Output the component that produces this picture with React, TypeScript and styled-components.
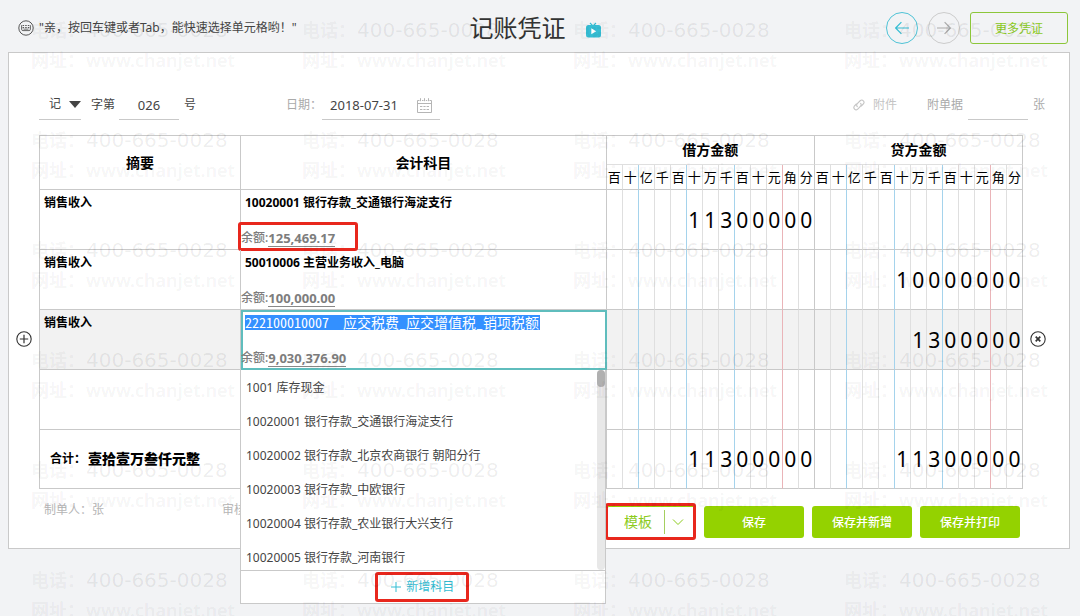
import React from "react";
import styled, { createGlobalStyle, css } from "styled-components";

const line = "#c9c9c9";
const softLine = "#dfdfdf";
const green = "#94d200";
const teal = "#5fbdbd";
const cyan = "#35bdd3";

const GlobalStyle = createGlobalStyle`
  * { box-sizing: border-box; }
  body {
    margin: 0;
    background: #f2f3f5;
    color: #444;
    font: 12px/16px "Noto Sans", "Noto Sans CJK SC", sans-serif;
  }
  button, input, select { font: inherit; color: inherit; margin: 0; }
  button { cursor: pointer; padding: 0; border: 0; background: none; }
  input, select { padding: 0; border: 0; border-radius: 0; background: none; outline: none; }
  svg { display: block; flex: none; }
`;

const Page = styled.div`
  position: relative;
  min-height: 100vh;
  overflow: hidden;
  padding-bottom: 64px;
`;

const Header = styled.header`
  display: grid;
  grid-template-columns: 1fr auto 1fr;
  align-items: center;
  padding: 12px 12px 8px 18px;
`;

const Tip = styled.p`
  display: flex;
  align-items: center;
  gap: 5px;
  margin: 0;
  white-space: nowrap;
`;

const TitleGroup = styled.div`
  display: flex;
  align-items: center;
  gap: 20px;
  padding-right: 16px;
  h1 {
    margin: 0;
    font-size: 24px;
    line-height: 32px;
    font-weight: 400;
    color: #333;
  }
  svg { margin-top: 4px; }
`;

const HeaderActions = styled.div`
  display: flex;
  justify-content: flex-end;
  gap: 10px;
`;

const RoundButton = styled.button<{ $tone: string; $ink: string }>`
  display: grid;
  place-items: center;
  width: 32px;
  height: 32px;
  border: 1px solid ${(p) => p.$tone};
  border-radius: 50%;
  color: ${(p) => p.$ink};
`;

const MoreButton = styled.button`
  width: 98px;
  height: 32px;
  padding-top: 1px;
  border: 1px solid #8cc63a;
  border-radius: 3px;
  color: #8ccb1c;
`;

const Panel = styled.main`
  margin: 0 10px 0 8px;
  padding: 36px 24px 10px 30px;
  border: 1px solid ${line};
  background: #fff;
`;

const MetaBar = styled.div`
  display: flex;
  align-items: center;
  height: 31px;
  margin-bottom: 15px;
`;

const Kind = styled.label`
  position: relative;
  display: flex;
  align-items: center;
  width: 42px;
  height: 30px;
  margin-right: 10px;
  border-bottom: 1px solid ${line};
  select {
    width: 100%;
    height: 100%;
    padding-left: 10px;
    appearance: none;
  }
  svg {
    position: absolute;
    right: 0;
    pointer-events: none;
  }
`;

const Field = styled.span<{ $width: number; $center?: boolean }>`
  display: flex;
  align-items: center;
  width: ${(p) => p.$width}px;
  height: 31px;
  margin-right: ${(p) => (p.$center ? 5 : 0)}px;
  padding: 2px 8px 0;
  border-bottom: 1px solid ${line};
  input {
    flex: 1;
    min-width: 0;
    font-size: 13px;
    text-align: ${(p) => (p.$center ? "center" : "left")};
  }
`;

const MetaLabel = styled.label<{ $tone?: string; $gap?: number }>`
  color: ${(p) => p.$tone || "#444"};
  margin-right: ${(p) => p.$gap || 0}px;
  white-space: nowrap;
`;

const DateGroup = styled.div`
  display: flex;
  align-items: center;
  margin-left: 90px;
`;

const AttachGroup = styled.div`
  display: flex;
  align-items: center;
  margin-left: auto;
  color: #aaa;
`;

const AttachButton = styled.button`
  display: flex;
  align-items: center;
  gap: 8px;
  margin-right: 30px;
  color: #c4c4c4;
`;

const TableWrap = styled.div`
  margin-right: 22px;
`;

const Ledger = styled.table`
  width: 100%;
  table-layout: fixed;
  border-spacing: 0;
  border-top: 1px solid ${line};
  border-left: 1px solid ${line};
  color: #000;
  th, td { padding: 0; }
`;

const SummaryCol = styled.col`
  width: 201px;
`;

const DigitCol = styled.col`
  width: 16px;
`;

const HeadCell = styled.th`
  height: 54px;
  border-right: 1px solid ${line};
  border-bottom: 1px solid ${line};
  font-size: 14px;
  line-height: 20px;
`;

const AmountHead = styled.th`
  height: 29px;
  border-right: 1px solid ${line};
  border-bottom: 1px solid ${softLine};
  font-size: 14px;
  line-height: 20px;
`;

const digitEdge = (i: number) => {
  if (i === 12) return line;
  if (i === 10) return "#eab4b8";
  if (i === 1 || i === 4 || i === 7) return "#a5d3ec";
  return softLine;
};

const UnitCell = styled.th<{ $i: number }>`
  height: 25px;
  border-right: 1px solid ${(p) => digitEdge(p.$i)};
  border-bottom: 1px solid ${line};
  font-size: 13px;
  font-weight: 400;
`;

const DigitCell = styled.td<{ $i: number }>`
  position: relative;
  border-right: 1px solid ${(p) => digitEdge(p.$i)};
  border-bottom: 1px solid ${line};
  font-size: 21px;
  line-height: 24px;
  text-align: center;
`;

const Row = styled.tr<{ $active?: boolean; $last?: boolean }>`
  height: ${(p) => (p.$last ? 59 : 60)}px;
  background: ${(p) => (p.$active ? "#f2f2f2" : "transparent")};
`;

const SummaryCell = styled.td`
  position: relative;
  border-right: 1px solid ${line};
  border-bottom: 1px solid ${line};
  vertical-align: top;
  font-weight: 700;
  p { margin: 0; padding: 5px 4px; }
`;

const SubjectCell = styled.td<{ $editing?: boolean }>`
  position: relative;
  border-right: 1px solid ${line};
  border-bottom: 1px solid ${line};
  vertical-align: top;
  font-weight: 700;
  ${(p) =>
    p.$editing &&
    css`
      background: #fff;
      border-color: ${teal};
      box-shadow: inset 2px 2px 0 ${teal}, inset -1px -1px 0 ${teal};
    `}
`;

const SubjectLine = styled.div`
  height: 40px;
  padding: 5px 4px;
`;

const SubjectInput = styled.input`
  display: block;
  width: 295px;
  height: 15px;
  background: #3390ff;
  color: #fff;
  font: 14px/15px "Noto Sans Mono CJK SC", "Noto Sans CJK SC", monospace;
`;

const Balance = styled.div`
  position: relative;
  display: inline-flex;
  color: #7d7d7d;
  font-weight: 500;
  strong {
    height: 17px;
    border-bottom: 1px solid #888;
    font-size: 13px;
  }
`;

const TotalCell = styled.td`
  border-right: 1px solid ${line};
  border-bottom: 1px solid ${line};
  font-weight: 700;
  strong { font-size: 14px; line-height: 20px; }
`;

const TotalLine = styled.div`
  display: flex;
  align-items: center;
  gap: 2px;
  padding-left: 10px;
`;

const RowButton = styled.button<{ $side: "left" | "right" }>`
  position: absolute;
  top: 21px;
  ${(p) => p.$side}: -24px;
  color: #333;
`;

const Callout = styled.span<{ $inset: string }>`
  position: absolute;
  inset: ${(p) => p.$inset};
  border: 3px solid #e8271d;
  border-radius: 3px;
  pointer-events: none;
`;

const Dropdown = styled.div`
  position: absolute;
  z-index: 2;
  top: calc(100% + 1px);
  left: -1px;
  right: 0;
  border: 1px solid ${line};
  border-top: 0;
  background: #fff;
  color: #444;
  font-weight: 400;
`;

const OptionArea = styled.div`
  display: flex;
  height: 200px;
  overflow: hidden;
`;

const Options = styled.ul`
  flex: 1;
  margin: 0;
  padding: 0;
  list-style: none;
`;

const Option = styled.li`
  padding: 10px 5px 8px;
`;

const ScrollTrack = styled.div`
  width: 8px;
  border-radius: 4px;
  background: #e8e8e8;
`;

const ScrollThumb = styled.div`
  height: 17px;
  border-radius: 4px;
  background: #b0b0b0;
`;

const DropdownFooter = styled.div`
  display: flex;
  justify-content: center;
  align-items: center;
  height: 33px;
  border-top: 1px solid ${line};
`;

const AddSubject = styled.button`
  position: relative;
  display: flex;
  align-items: center;
  gap: 5px;
  color: ${cyan};
`;

const Footer = styled.footer`
  display: flex;
  align-items: flex-start;
  padding: 12px 25px 0 5px;
  color: #b5b5b5;
`;

const Signer = styled.span`
  width: 178px;
  padding-top: 1px;
`;

const FooterActions = styled.div`
  display: flex;
  gap: 8px;
  margin: 5px 0 0 auto;
`;

const SaveButton = styled.button`
  width: 100px;
  height: 32px;
  padding-top: 1px;
  border-radius: 3px;
  background: ${green};
  color: #fff;
  font-weight: 500;
`;

const TemplateButton = styled.button`
  position: relative;
  display: flex;
  align-items: center;
  width: 90px;
  height: 32px;
  border: 1px solid ${green};
  border-radius: 3px;
  color: #8ccb1c;
  font-size: 14px;
  span:first-child { width: 57px; padding-left: 5px; }
  svg { margin-left: 7px; }
`;

const Divider = styled.i`
  width: 1px;
  height: 24px;
  background: #a5cf60;
`;

const WatermarkLayer = styled.div`
  position: absolute;
  z-index: 3;
  inset: 0;
  display: grid;
  grid-template-columns: repeat(auto-fill, 271px);
  grid-auto-rows: 110px;
  width: calc(100% + 271px);
  padding: 15px 0 0 31px;
  color: rgba(0, 0, 0, 0.055);
  font-size: 18px;
  line-height: 30px;
  pointer-events: none;
  user-select: none;
`;

const WatermarkLine = styled.div<{ $phone?: boolean }>`
  display: flex;
  height: 30px;
  b { width: 55px; font-weight: 700; }
  span {
    color: rgba(0, 0, 0, ${(p) => (p.$phone ? 0.075 : 0.055)});
    font-family: ${(p) => (p.$phone ? '"DejaVu Sans"' : '"Noto Sans"')}, sans-serif;
    font-size: ${(p) => (p.$phone ? 20 : 18)}px;
    font-weight: ${(p) => (p.$phone ? 400 : 600)};
  }
`;

const units = [..."百十亿千百十万千百十元角分"];

const options = [
  "1001 库存现金",
  "10020001 银行存款_交通银行海淀支行",
  "10020002 银行存款_北京农商银行 朝阳分行",
  "10020003 银行存款_中欧银行",
  "10020004 银行存款_农业银行大兴支行",
  "10020005 银行存款_河南银行",
];

function Digits({ value = "", children }: { value?: string; children?: React.ReactNode }) {
  const cells = [...value.padStart(13, " ")];
  return (
    <>
      {cells.map((c, i) => (
        <DigitCell key={i} $i={i}>
          {c.trim()}
          {i === 12 && children}
        </DigitCell>
      ))}
    </>
  );
}

function KeyboardIcon() {
  return (
    <svg width="16" height="16" viewBox="0 0 16 16" fill="none" stroke="#555">
      <circle cx="8" cy="8" r="7.2" />
      <path d="M3.6 5.2v4c0 .9.5 1.4 1.3 1.4h6.2c.8 0 1.3-.5 1.3-1.4v-4" strokeWidth=".9" />
      <path d="M4.6 5.5h7M4.6 7.6h7" strokeWidth="1.1" strokeDasharray="1.5 1.1" />
      <path d="M5.6 9.2h4.8" strokeWidth=".8" />
    </svg>
  );
}

function TvIcon() {
  return (
    <svg width="15" height="16" viewBox="0 0 15 16">
      <path d="M4 1l3 3 3-3" fill="none" stroke={cyan} strokeWidth="1.1" />
      <rect y="3" width="15" height="12.5" rx="2.5" fill={cyan} />
      <path d="M5.3 6.2l4.9 3-4.9 3z" fill="#fff" />
    </svg>
  );
}

function Arrow({ flip }: { flip?: boolean }) {
  return (
    <svg width="14" height="14" viewBox="0 0 14 14" fill="none" stroke="currentColor" strokeWidth="1.2">
      <path d={flip ? "M0 7h13.3M7.6 1.2L13.3 7l-5.7 5.8" : "M14 7H.7M6.4 1.2L.7 7l5.7 5.8"} />
    </svg>
  );
}

function CalendarIcon() {
  return (
    <svg width="15" height="15" viewBox="0 0 15 15" fill="none" stroke="#b5b5b5">
      <path d="M2.5 2.5h-2v12h14v-12h-2M5 2.5h1.5M8.8 2.5h1.4M3.5.2v3M7.5.2v3M11.5.2v3M.5 5.5h14" />
      <path d="M3 8.5h2.4M6.4 8.5h2.2M9.6 8.5H12M3 11.5h2.4M6.4 11.5h2.2M9.6 11.5H12" />
    </svg>
  );
}

function ClipIcon() {
  return (
    <svg width="12" height="12" viewBox="0 0 12 12" fill="none" stroke="currentColor" strokeWidth="1.1" strokeLinecap="round">
      <path d="M4.3 7.6a2 2 0 0 1 0-2.9L7.4 1.5a2.3 2.3 0 0 1 3.2 3.2L8.3 7" />
      <path d="M7.6 4.3a2 2 0 0 1 0 2.9l-3.1 3.2a2.3 2.3 0 0 1-3.2-3.2L3.4 5" />
    </svg>
  );
}

function CircleIcon({ kind }: { kind: "plus" | "close" }) {
  return (
    <svg width="16" height="16" viewBox="0 0 16 16" fill="none" stroke="currentColor">
      <circle cx="8" cy="8" r="7.2" strokeWidth="1.1" />
      {kind === "plus" ? (
        <path d="M8 3.8v8.4M3.8 8h8.4" strokeWidth="1.2" />
      ) : (
        <path d="M5.7 5.7l4.6 4.6M10.3 5.7l-4.6 4.6" strokeWidth="1.7" />
      )}
    </svg>
  );
}

function Watermark() {
  return (
    <WatermarkLayer aria-hidden="true">
      {Array.from({ length: 24 }, (_, i) => (
        <div key={i}>
          <WatermarkLine $phone>
            <b>电话：</b>
            <span>400-665-0028</span>
          </WatermarkLine>
          <WatermarkLine>
            <b>网址：</b>
            <span>www.chanjet.net</span>
          </WatermarkLine>
        </div>
      ))}
    </WatermarkLayer>
  );
}

export default function App() {
  return (
    <Page>
      <GlobalStyle />
      <Header>
        <Tip>
          <KeyboardIcon />
          "亲，按回车键或者Tab，能快速选择单元格哟！"
        </Tip>
        <TitleGroup>
          <h1>记账凭证</h1>
          <TvIcon />
        </TitleGroup>
        <HeaderActions>
          <RoundButton $tone="#4fc3d6" $ink={cyan} aria-label="上一张">
            <Arrow />
          </RoundButton>
          <RoundButton $tone="#ccc" $ink="#aaa" aria-label="下一张">
            <Arrow flip />
          </RoundButton>
          <MoreButton>更多凭证</MoreButton>
        </HeaderActions>
      </Header>

      <Panel>
        <MetaBar>
          <Kind>
            <select aria-label="凭证字">
              <option>记</option>
            </select>
            <svg width="12" height="7" viewBox="0 0 12 7">
              <path d="M0 0h12L6 7z" fill="#444" />
            </svg>
          </Kind>
          <MetaLabel htmlFor="number" $gap={4}>字第</MetaLabel>
          <Field $width={60} $center>
            <input id="number" defaultValue="026" />
          </Field>
          <MetaLabel htmlFor="number">号</MetaLabel>
          <DateGroup>
            <MetaLabel htmlFor="date" $tone="#aaa">日期：</MetaLabel>
            <Field $width={118}>
              <input id="date" defaultValue="2018-07-31" />
              <CalendarIcon />
            </Field>
          </DateGroup>
          <AttachGroup>
            <AttachButton>
              <ClipIcon />
              附件
            </AttachButton>
            <MetaLabel htmlFor="papers" $tone="#aaa" $gap={5}>附单据</MetaLabel>
            <Field $width={60} $center>
              <input id="papers" />
            </Field>
            <MetaLabel htmlFor="papers" $tone="#aaa">张</MetaLabel>
          </AttachGroup>
        </MetaBar>

        <TableWrap>
          <Ledger>
            <colgroup>
              <SummaryCol />
              <col />
              {Array.from({ length: 26 }, (_, i) => (
                <DigitCol key={i} />
              ))}
            </colgroup>
            <thead>
              <tr>
                <HeadCell rowSpan={2}>摘要</HeadCell>
                <HeadCell rowSpan={2}>会计科目</HeadCell>
                <AmountHead colSpan={13}>借方金额</AmountHead>
                <AmountHead colSpan={13}>贷方金额</AmountHead>
              </tr>
              <tr>
                {[...units, ...units].map((u, i) => (
                  <UnitCell key={i} $i={i % 13}>{u}</UnitCell>
                ))}
              </tr>
            </thead>
            <tbody>
              <Row>
                <SummaryCell><p>销售收入</p></SummaryCell>
                <SubjectCell>
                  <SubjectLine>10020001 银行存款_交通银行海淀支行</SubjectLine>
                  <Balance>
                    余额:<strong>125,469.17</strong>
                    <Callout $inset="-8px -23px -4px -3px" />
                  </Balance>
                </SubjectCell>
                <Digits value="11300000" />
                <Digits />
              </Row>
              <Row>
                <SummaryCell><p>销售收入</p></SummaryCell>
                <SubjectCell>
                  <SubjectLine>50010006 主营业务收入_电脑</SubjectLine>
                  <Balance>余额:<strong>100,000.00</strong></Balance>
                </SubjectCell>
                <Digits />
                <Digits value="10000000" />
              </Row>
              <Row $active>
                <SummaryCell>
                  <p>销售收入</p>
                  <RowButton $side="left" aria-label="增加分录">
                    <CircleIcon kind="plus" />
                  </RowButton>
                </SummaryCell>
                <SubjectCell $editing>
                  <SubjectLine>
                    <SubjectInput
                      aria-label="会计科目"
                      defaultValue="222100010007  应交税费_应交增值税_销项税额"
                    />
                  </SubjectLine>
                  <Balance>余额:<strong>9,030,376.90</strong></Balance>
                  <Dropdown>
                    <OptionArea>
                      <Options>
                        {options.map((o) => (
                          <Option key={o}>{o}</Option>
                        ))}
                      </Options>
                      <ScrollTrack>
                        <ScrollThumb />
                      </ScrollTrack>
                    </OptionArea>
                    <DropdownFooter>
                      <AddSubject>
                        <svg width="10" height="10" viewBox="0 0 10 10" stroke="currentColor">
                          <path d="M5 0v10M0 5h10" />
                        </svg>
                        新增科目
                        <Callout $inset="-7px -15px -7px -16px" />
                      </AddSubject>
                    </DropdownFooter>
                  </Dropdown>
                </SubjectCell>
                <Digits />
                <Digits value="1300000">
                  <RowButton $side="right" aria-label="删除分录">
                    <CircleIcon kind="close" />
                  </RowButton>
                </Digits>
              </Row>
              <Row>
                <SummaryCell />
                <SubjectCell />
                <Digits />
                <Digits />
              </Row>
              <Row $last>
                <TotalCell colSpan={2}>
                  <TotalLine>
                    合计：<strong>壹拾壹万叁仟元整</strong>
                  </TotalLine>
                </TotalCell>
                <Digits value="11300000" />
                <Digits value="11300000" />
              </Row>
            </tbody>
          </Ledger>
        </TableWrap>

        <Footer>
          <Signer>制单人：张</Signer>
          <Signer>审核人：</Signer>
          <FooterActions>
            <TemplateButton>
              <span>模板</span>
              <Divider />
              <svg width="12" height="12" viewBox="0 0 12 12" fill="none" stroke="currentColor">
                <path d="M1 3.5l5 5 5-5" />
              </svg>
              <Callout $inset="-4px -1px -3px -2px" />
            </TemplateButton>
            <SaveButton>保存</SaveButton>
            <SaveButton>保存并新增</SaveButton>
            <SaveButton>保存并打印</SaveButton>
          </FooterActions>
        </Footer>
      </Panel>
      <Watermark />
    </Page>
  );
}
